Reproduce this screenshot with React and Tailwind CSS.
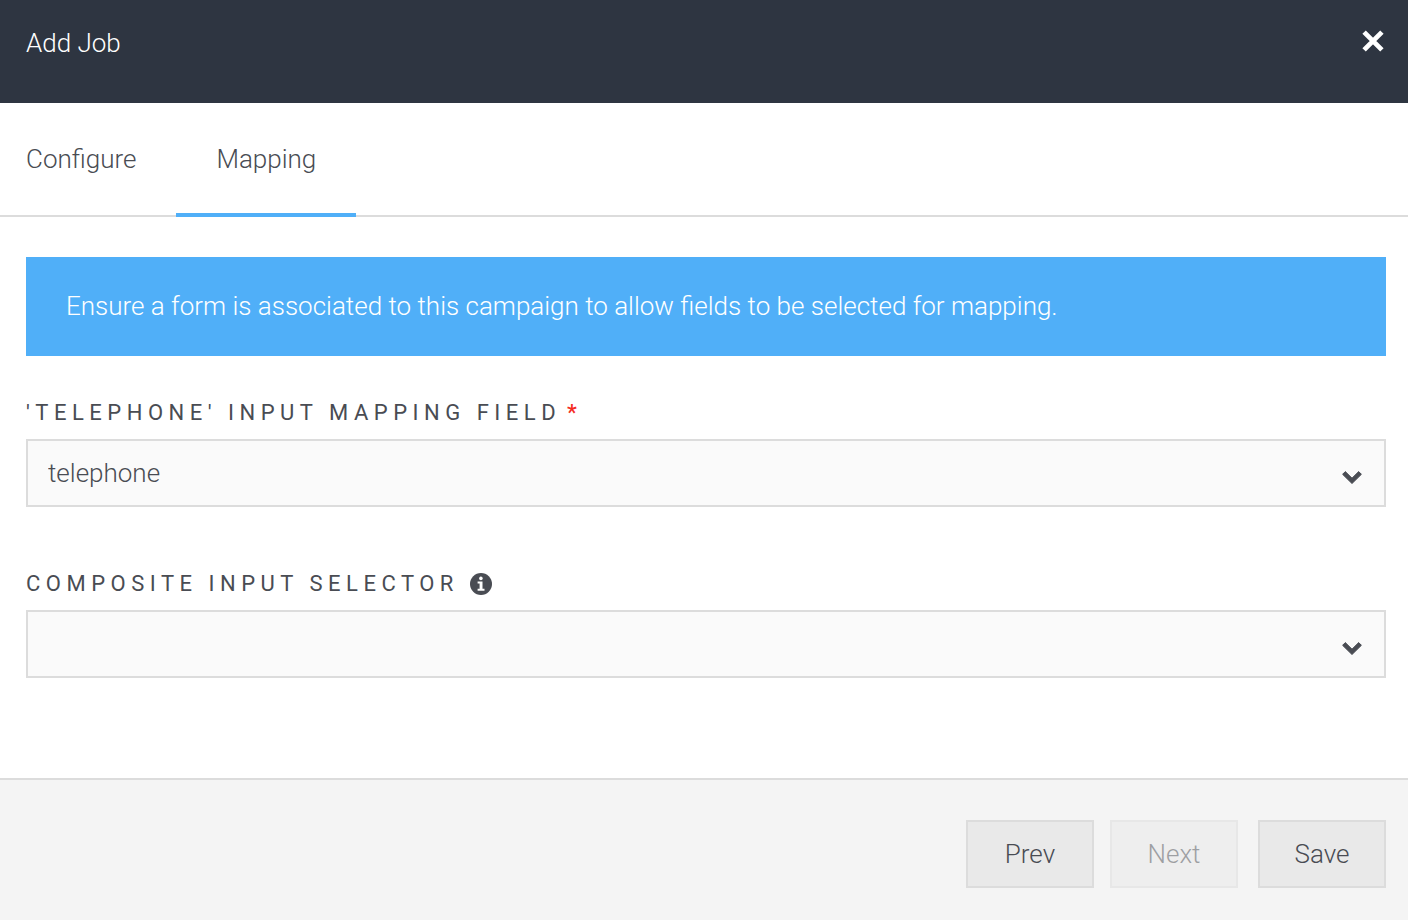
import { useState } from 'react';
import clsx from 'clsx';

const TABS = ['Configure', 'Mapping'];

function CloseIcon() {
  return (
    <svg viewBox="0 0 21 21" className="size-[22px]" stroke="currentColor" strokeWidth="4.6" aria-hidden="true">
      <path d="M2 2l17 17M19 2L2 19" />
    </svg>
  );
}

function InfoIcon() {
  return (
    <svg viewBox="0 0 22 22" className="size-[22px]" aria-hidden="true">
      <circle cx="11" cy="11" r="11" fill="currentColor" />
      <circle cx="10.9" cy="5.4" r="1.8" fill="#fff" />
      <path d="M7.6 8.5h4.9v7.2h2v2H7.6v-2h2v-5.2h-2z" fill="#fff" />
    </svg>
  );
}

function ChevronIcon() {
  return (
    <svg
      viewBox="0 0 20 13"
      className="pointer-events-none absolute right-6 top-8 h-[13px] w-5"
      fill="currentColor"
      stroke="currentColor"
      strokeLinejoin="round"
      aria-hidden="true"
    >
      <path d="M.6 3.3L3.3.6 10 7.2 16.7.6l2.7 2.7L10 12.5z" />
    </svg>
  );
}

function SelectField({ id, label, required, info, value, onChange, options }) {
  return (
    <div>
      <div className="flex h-8 items-center text-[22px] leading-8">
        <label htmlFor={id} className="font-normal uppercase tracking-[0.25em]">
          {label}
        </label>
        {required && <span className="ml-1.5 font-medium text-[#f42c1f]">*</span>}
        {info && (
          <button type="button" aria-label="More information" className="ml-[11px]">
            <InfoIcon />
          </button>
        )}
      </div>
      <div className="relative mt-2.5">
        <select
          id={id}
          required={required}
          value={value}
          onChange={(e) => onChange(e.target.value)}
          className="block h-[68px] w-full appearance-none border-2 border-[#dcdcdc] bg-[#fafafa] pl-5 pr-14 outline-none"
        >
          {options.map((option) => (
            <option key={option} value={option}>
              {option}
            </option>
          ))}
        </select>
        <ChevronIcon />
      </div>
    </div>
  );
}

function FooterButton({ children, className, ...props }) {
  return (
    <button
      type="button"
      className={clsx('h-[68px] w-32 border-2 border-[#dcdcdc] bg-[#e9e9e9] disabled:opacity-50', className)}
      {...props}
    >
      {children}
    </button>
  );
}

export default function App() {
  const [tab, setTab] = useState('Mapping');
  const [telephone, setTelephone] = useState('telephone');
  const [composite, setComposite] = useState('');

  return (
    <div className="flex min-h-screen flex-col bg-white font-[Roboto,sans-serif] text-[26px] font-light leading-9 text-[#494c53]">
      <header className="flex items-start justify-between bg-[#2e3541] pb-[42px] pl-[26px] pr-6 pt-[25px] text-white">
        <h1>Add Job</h1>
        <button type="button" aria-label="Close" className="mt-[5px]">
          <CloseIcon />
        </button>
      </header>

      <nav className="flex border-b-2 border-[#dcdcdc]">
        {TABS.map((name) => (
          <button
            key={name}
            type="button"
            onClick={() => setTab(name)}
            className={clsx(
              '-mb-0.5 border-b-4 px-10 pb-9 pt-[38px] first:pl-[26px]',
              tab === name ? 'border-[#50aff8]' : 'border-transparent'
            )}
          >
            {name}
          </button>
        ))}
      </nav>

      <main className="grow px-[26px] pb-[100px] pr-[22px] pt-10">
        <p className="mb-[41px] bg-[#50aff8] px-10 pb-8 pt-[31px] text-white">
          Ensure a form is associated to this campaign to allow fields to be selected for mapping.
        </p>
        <div className="flex flex-col gap-[61px]">
          <SelectField
            id="telephone-field"
            label="'Telephone' input mapping field"
            required
            value={telephone}
            onChange={setTelephone}
            options={['telephone']}
          />
          <SelectField
            id="composite-selector"
            label="Composite input selector"
            info
            value={composite}
            onChange={setComposite}
            options={['']}
          />
        </div>
      </main>

      <footer className="flex justify-end border-t-2 border-[#dcdcdc] bg-[#f4f4f4] pb-8 pr-[22px] pt-10">
        <FooterButton>Prev</FooterButton>
        <FooterButton disabled className="ml-4">
          Next
        </FooterButton>
        <FooterButton className="ml-5">Save</FooterButton>
      </footer>
    </div>
  );
}
